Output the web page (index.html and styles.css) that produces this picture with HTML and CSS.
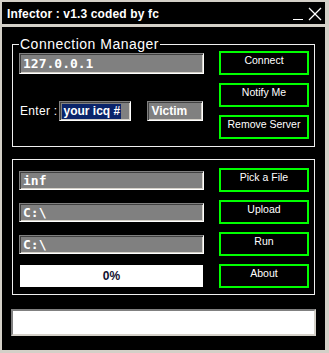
FILE: index.html
```html
<!DOCTYPE html>
<html lang="en">
<head>
    <meta charset="UTF-8">
    <meta name="viewport" content="width=device-width, initial-scale=1.0">
    <title>Infector</title>
    <link rel="stylesheet" href="styles.css">
</head>
<body>

    <div class="window">
        <!-- Title bar -->
        <div class="titlebar">
            <span class="title">Infector : v1.3 coded by fc</span>
            <svg class="controls" width="30" height="14" viewBox="0 0 30 14">
                <line x1="1" y1="12.5" x2="11" y2="12.5" stroke="#fff" stroke-width="1"/>
                <line x1="17" y1="1" x2="29" y2="13" stroke="#fff" stroke-width="1.3"/>
                <line x1="29" y1="1" x2="17" y2="13" stroke="#fff" stroke-width="1.3"/>
            </svg>
        </div>

        <div class="content">
            <!-- Connection Manager -->
            <div class="group connection">
                <span class="legend">Connection Manager</span>
                <div class="field ip">127.0.0.1</div>
                <button class="btn">Connect</button>
                <div class="enter-row">
                    <label class="enter-label">Enter :</label>
                    <div class="field icq"><span class="selected">your icq #</span></div>
                    <div class="field victim">Victim</div>
                </div>
                <button class="btn">Notify Me</button>
                <button class="btn">Remove Server</button>
            </div>

            <!-- Files -->
            <div class="group files">
                <div class="field path">inf</div>
                <button class="btn">Pick a File</button>
                <div class="field path">C:\</div>
                <button class="btn">Upload</button>
                <div class="field path">C:\</div>
                <button class="btn">Run</button>
                <div class="progress">0%</div>
                <button class="btn">About</button>
            </div>

            <div class="status"></div>
        </div>
    </div>

</body>
</html>
```

FILE: styles.css
```css
html, body {
    margin: 0;
    background: #000;
}
.window {
    width: 329px;
    height: 353px;
    box-sizing: border-box;
    border-style: solid;
    border-color: #d4d0c8;
    border-width: 2px 4px 3px 2px;
    background: #000;
    display: flex;
    flex-direction: column;
    font-family: 'Liberation Sans', Arial, sans-serif;
    color: #fff;
}
.titlebar {
    height: 22px;
    flex: none;
    display: flex;
    align-items: center;
    justify-content: space-between;
    padding: 0 3px 0 5px;
    border-bottom: 3px solid #d4d0c8;
}
.title {
    font-size: 12px;
    font-weight: bold;
    letter-spacing: 0.15px;
    padding-top: 2px;
}
.controls {
    display: block;
    margin-top: 2px;
}
.content {
    flex: 1;
    padding: 17px 10px 0 10px;
    display: flex;
    flex-direction: column;
}
.group {
    position: relative;
    border: 1px solid #f0f0f0;
    padding: 6px 5px 7px 6px;
    display: grid;
    grid-template-columns: 185px 90px;
    grid-auto-rows: 24px;
    column-gap: 15px;
    row-gap: 8px;
}
.files {
    margin-top: 12px;
    padding-top: 8px;
    padding-bottom: 6px;
}
.legend {
    position: absolute;
    top: -9px;
    left: 6px;
    padding: 0 1px;
    background: #000;
    font-size: 14px;
    line-height: 16px;
    letter-spacing: 0.5px;
}
.btn {
    grid-column: 2;
    margin: 0;
    padding: 0;
    border: 2px solid #00ff00;
    background: #000;
    color: #fff;
    font-family: inherit;
    font-size: 10.5px;
    line-height: 14px;
    text-align: center;
    display: flex;
    justify-content: center;
    align-items: flex-start;
}
.field {
    grid-column: 1;
    align-self: center;
    box-sizing: border-box;
    height: 19px;
    border: 1px solid;
    border-color: #808080 #fff #fff #808080;
    box-shadow: inset 1px 1px 0 #404040, inset -1px -1px 0 #d4d0c8;
    background: #808080;
    color: #fff;
    font-family: 'DejaVu Sans Mono', monospace;
    font-weight: bold;
    font-size: 13px;
    line-height: 17px;
    padding-left: 3px;
    white-space: nowrap;
    overflow: hidden;
}
.ip {
    height: 21px;
    line-height: 19px;
}
.enter-row {
    grid-column: 1;
    grid-row: 2 / span 2;
    align-self: center;
    display: flex;
    align-items: center;
    padding-left: 1px;
}
.enter-label {
    font-size: 12px;
    letter-spacing: 0.3px;
    margin-right: 2px;
}
.enter-row .field {
    height: 20px;
    font-family: 'Liberation Sans', Arial, sans-serif;
    font-size: 12px;
    line-height: 18px;
}
.icq {
    width: 72px;
    padding-left: 2px;
}
.selected {
    display: inline-block;
    background: #0a246a;
    line-height: 15px;
    padding: 0 1px;
}
.victim {
    width: 56px;
    margin-left: 16px;
}
.progress {
    grid-column: 1;
    align-self: center;
    height: 22px;
    width: 183px;
    margin-left: 1px;
    background: #fff;
    color: #101030;
    font-size: 12px;
    font-weight: bold;
    line-height: 22px;
    text-align: center;
}
.status {
    margin: 14px 0 0 -1px;
    height: 27px;
    box-sizing: border-box;
    width: 305px;
    border: 2px solid;
    border-color: #808080 #d4d0c8 #d4d0c8 #808080;
    background: #fff;
}
```
